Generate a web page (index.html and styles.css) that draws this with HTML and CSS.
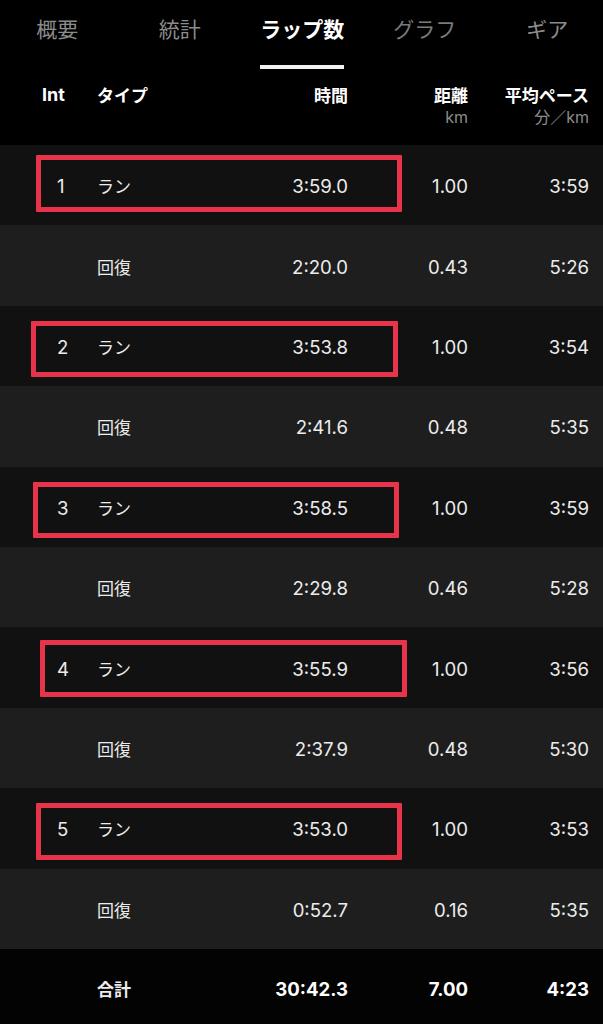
FILE: index.html
```html
<!DOCTYPE html>
<html lang="ja">
<head>
<meta charset="utf-8">
<link rel="stylesheet" href="styles.css">
</head>
<body>
<div class="screen">
  <nav class="tabs">
    <div class="tab"><span class="label">概要</span></div>
    <div class="tab"><span class="label">統計</span></div>
    <div class="tab active"><span class="label">ラップ数</span></div>
    <div class="tab dim"><span class="label">グラフ</span></div>
    <div class="tab"><span class="label">ギア</span></div>
  </nav>

  <div class="head grid">
    <div class="c-int"><span class="h">Int</span></div>
    <div class="c-type"><span class="h jp">タイプ</span></div>
    <div class="c-time"><span class="h jp">時間</span></div>
    <div class="c-dist"><span class="h jp">距離</span><span class="unit">km</span></div>
    <div class="c-pace"><span class="h jp">平均ペース</span><span class="unit">分／km</span></div>
  </div>

  <div class="table">
    <div class="row grid odd"><div class="c-int num">1</div><div class="c-type jp">ラン</div><div class="c-time num">3:59.0</div><div class="c-dist num">1.00</div><div class="c-pace num">3:59</div></div>
    <div class="row grid even"><div class="c-int num"></div><div class="c-type jp">回復</div><div class="c-time num">2:20.0</div><div class="c-dist num">0.43</div><div class="c-pace num">5:26</div></div>
    <div class="row grid odd"><div class="c-int num">2</div><div class="c-type jp">ラン</div><div class="c-time num">3:53.8</div><div class="c-dist num">1.00</div><div class="c-pace num">3:54</div></div>
    <div class="row grid even"><div class="c-int num"></div><div class="c-type jp">回復</div><div class="c-time num">2:41.6</div><div class="c-dist num">0.48</div><div class="c-pace num">5:35</div></div>
    <div class="row grid odd"><div class="c-int num">3</div><div class="c-type jp">ラン</div><div class="c-time num">3:58.5</div><div class="c-dist num">1.00</div><div class="c-pace num">3:59</div></div>
    <div class="row grid even"><div class="c-int num"></div><div class="c-type jp">回復</div><div class="c-time num">2:29.8</div><div class="c-dist num">0.46</div><div class="c-pace num">5:28</div></div>
    <div class="row grid odd"><div class="c-int num">4</div><div class="c-type jp">ラン</div><div class="c-time num">3:55.9</div><div class="c-dist num">1.00</div><div class="c-pace num">3:56</div></div>
    <div class="row grid even"><div class="c-int num"></div><div class="c-type jp">回復</div><div class="c-time num">2:37.9</div><div class="c-dist num">0.48</div><div class="c-pace num">5:30</div></div>
    <div class="row grid odd"><div class="c-int num">5</div><div class="c-type jp">ラン</div><div class="c-time num">3:53.0</div><div class="c-dist num">1.00</div><div class="c-pace num">3:53</div></div>
    <div class="row grid even"><div class="c-int num"></div><div class="c-type jp">回復</div><div class="c-time num">0:52.7</div><div class="c-dist num">0.16</div><div class="c-pace num">5:35</div></div>

    <div class="mark m1"></div>
    <div class="mark m2"></div>
    <div class="mark m3"></div>
    <div class="mark m4"></div>
    <div class="mark m5"></div>
  </div>

  <div class="total grid">
    <div class="c-int"></div>
    <div class="c-type jp">合計</div>
    <div class="c-time num">30:42.3</div>
    <div class="c-dist num">7.00</div>
    <div class="c-pace num">4:23</div>
  </div>
</div>
</body>
</html>
```

FILE: styles.css
```css
* { box-sizing: border-box; }
html, body {
  margin: 0;
  padding: 0;
  background: #000;
}
body {
  font-family: Inter, "Noto Sans CJK JP", sans-serif;
  color: #ececec;
  width: 603px;
  height: 1024px;
  overflow: hidden;
}
.screen { width: 603px; }

/* tabs */
.tabs {
  display: grid;
  grid-template-columns: repeat(5, 122.5px);
  margin-left: -4px;
  height: 69px;
  padding-top: 15px;
}
.tab {
  display: flex;
  justify-content: center;
  align-items: flex-start;
}
.tab .label {
  font-family: "Noto Sans CJK JP", sans-serif;
  font-size: 21px;
  line-height: 26px;
  color: #8c8c8c;
  padding-bottom: 24px;
  border-bottom: 4px solid transparent;
}
.tab.dim .label { color: #7a7a7a; }
.tab.active .label {
  color: #fff;
  font-weight: 700;
  border-bottom-color: #f2f2f2;
}

/* grid columns */
.grid {
  display: grid;
  grid-template-columns: 55px 130px 121px 120px 121px;
  padding: 0 14px 0 42px;
}
.c-time, .c-dist, .c-pace { text-align: right; }
.jp { font-family: "Noto Sans CJK JP", sans-serif; }

/* header */
.head {
  height: 76px;
  padding-top: 14px;
  align-items: start;
}
.head > div {
  display: flex;
  flex-direction: column;
}
.head .c-time, .head .c-dist, .head .c-pace { align-items: flex-end; }
.h {
  font-size: 17px;
  font-weight: 700;
  line-height: 24px;
  color: #fff;
}
.c-int .h { font-size: 18px; font-family: Inter, sans-serif; }
.unit {
  font-size: 16px;
  line-height: 20px;
  color: #8c8c8c;
}

/* rows */
.table { position: relative; }
.row {
  height: 80.4px;
  align-items: center;
  padding-top: 2px;
}
.row.odd { background: #111111; }
.row.even { background: #1e1e1e; }
.num {
  font-size: 18.6px;
  line-height: 24px;
  color: #ececec;
}
.c-type.jp {
  font-size: 17px;
  line-height: 24px;
  color: #ececec;
}
.row .c-int { padding-left: 15px; }

/* total */
.total {
  height: 75px;
  background: #030303;
  align-items: center;
  padding-top: 6px;
}
.total > div {
  font-weight: 700;
  color: #fff;
}

/* red annotation boxes */
.mark {
  position: absolute;
  border: 5px solid #e8344a;
  border-radius: 1px;
}
.m1 { left: 36px; top: 10px; width: 366px; height: 57px; }
.m2 { left: 31px; top: 176px; width: 367px; height: 56px; }
.m3 { left: 33px; top: 337px; width: 366px; height: 56px; }
.m4 { left: 40px; top: 495px; width: 367px; height: 57px; }
.m5 { left: 36px; top: 658px; width: 366px; height: 57px; }
```
